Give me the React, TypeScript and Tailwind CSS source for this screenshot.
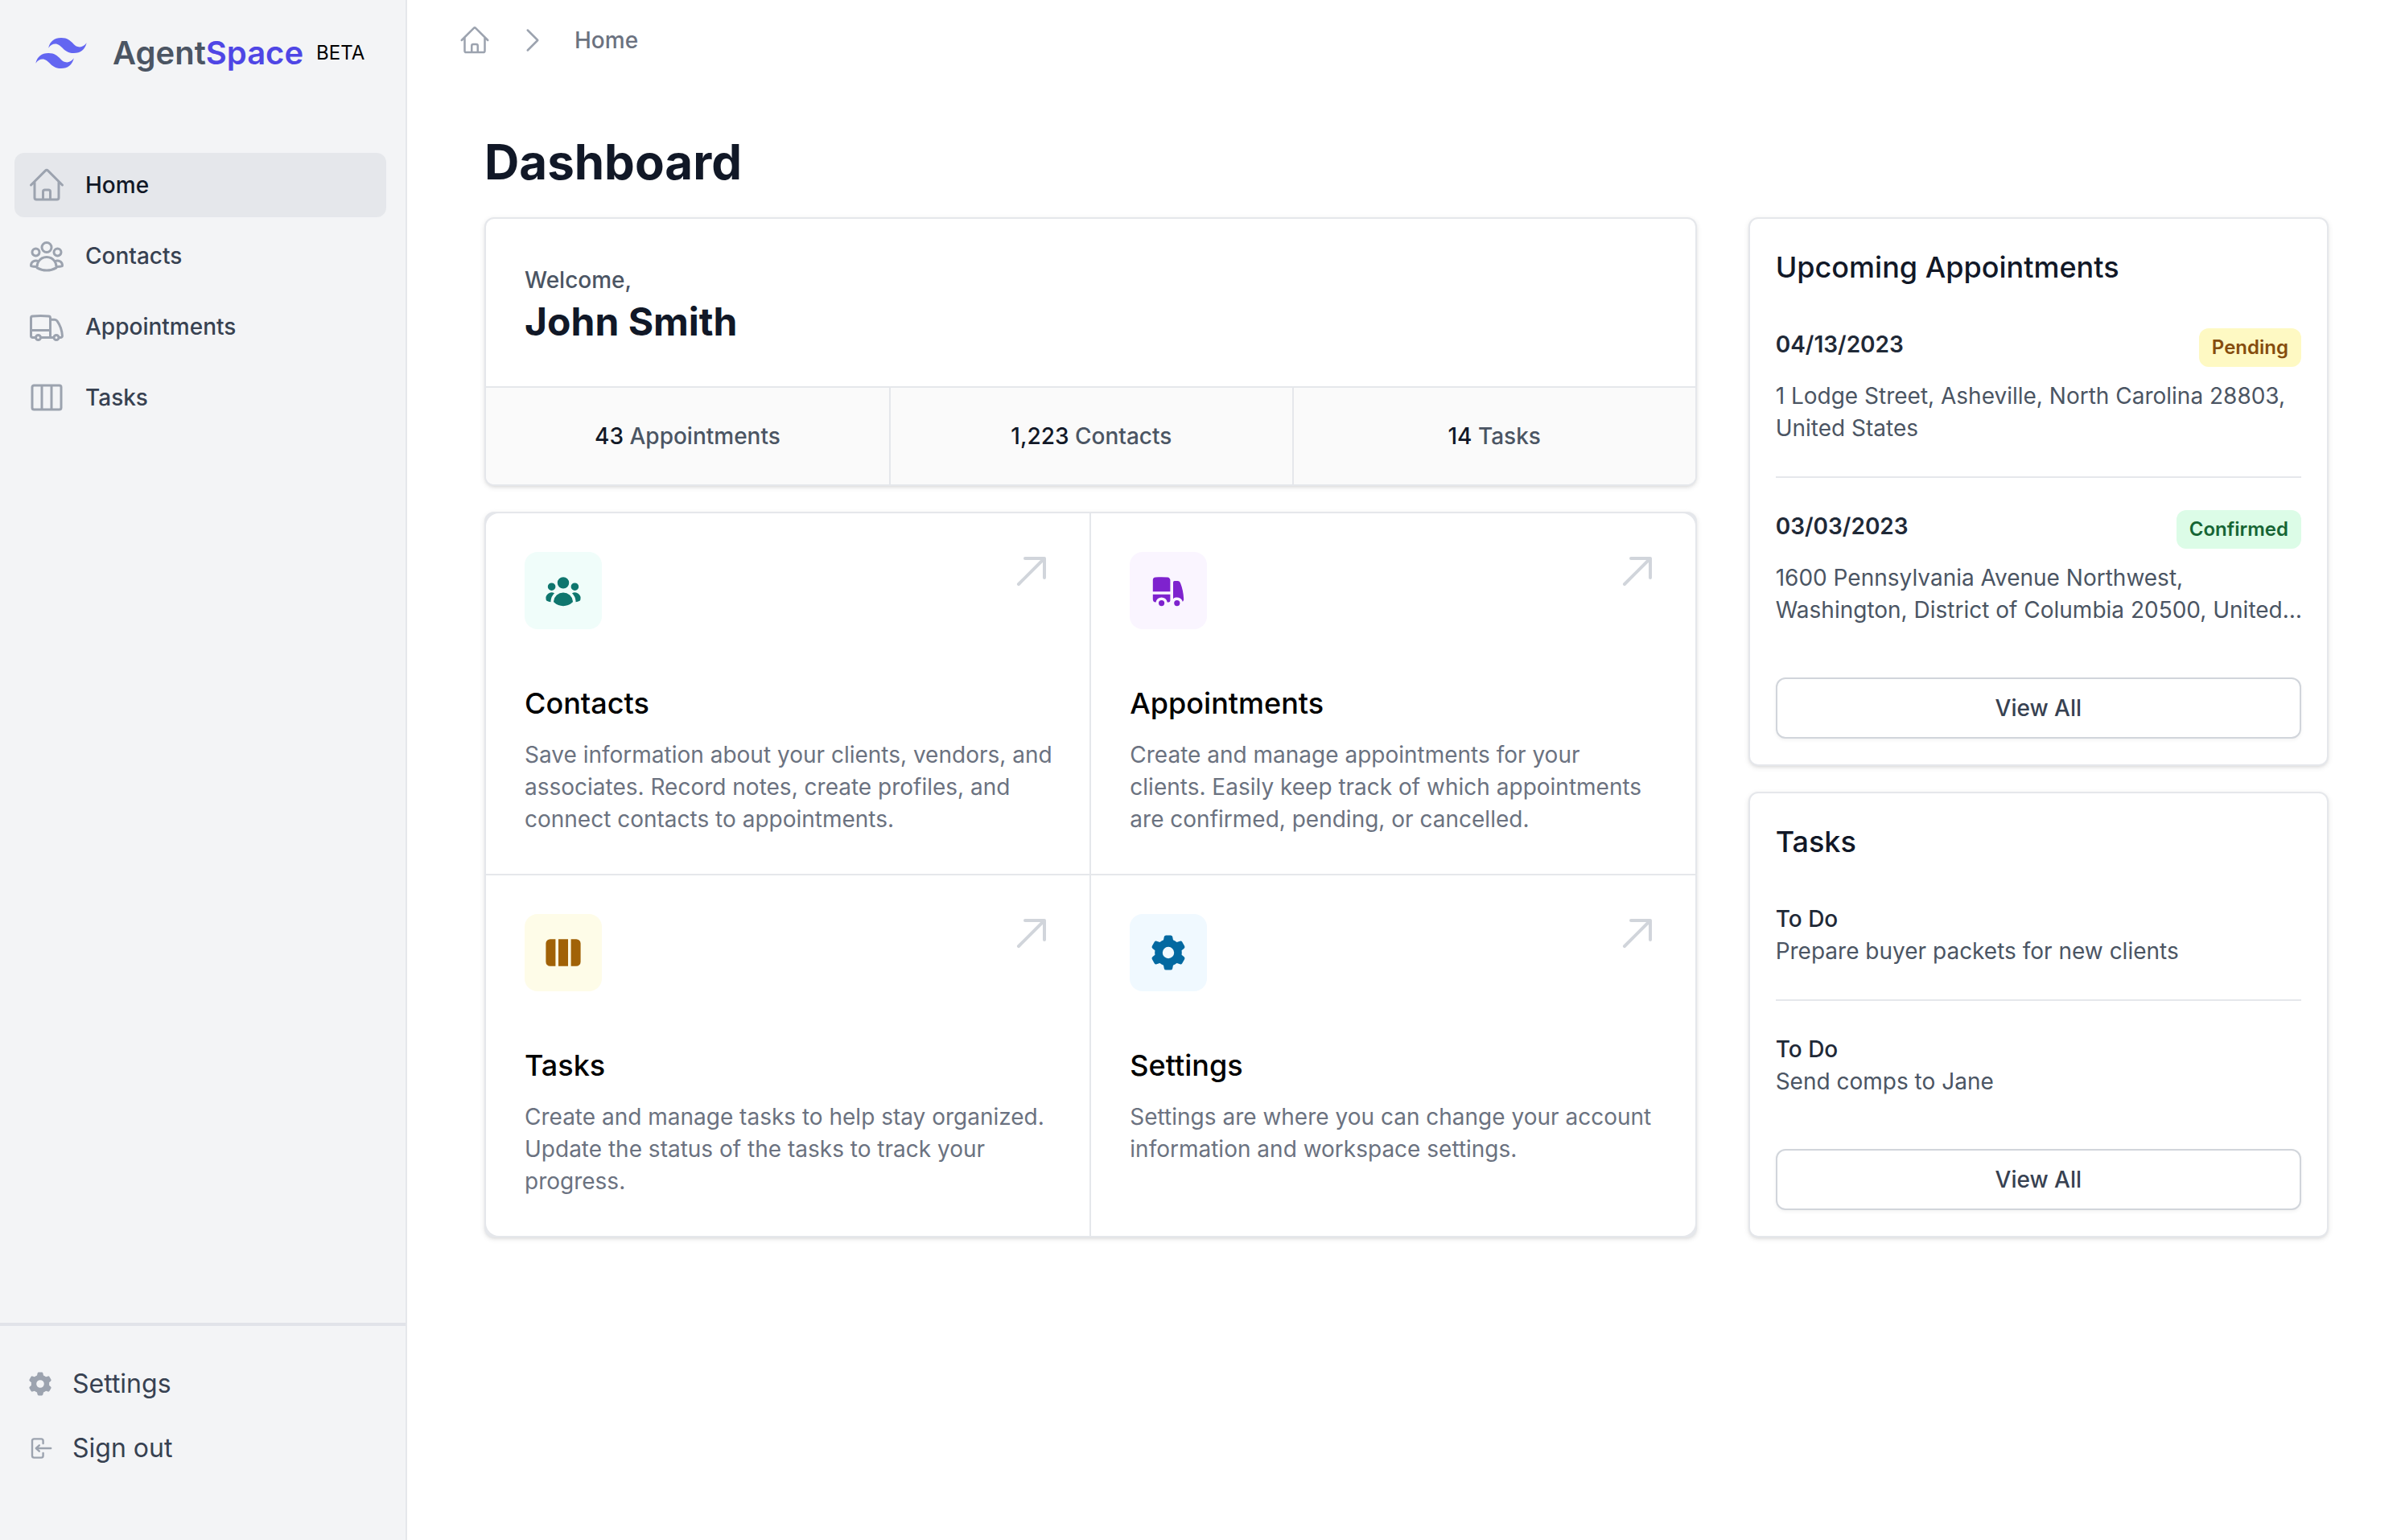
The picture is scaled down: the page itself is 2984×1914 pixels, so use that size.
import type { IconType } from 'react-icons';
import {
  HiMiniArrowLeftOnRectangle,
  HiMiniCog6Tooth,
  HiMiniTruck,
  HiMiniUserGroup,
  HiMiniViewColumns,
  HiOutlineChevronRight,
  HiOutlineHome,
  HiOutlineTruck,
  HiOutlineUserGroup,
  HiOutlineViewColumns,
} from 'react-icons/hi2';

const navigation: { name: string; icon: IconType; current?: boolean }[] = [
  { name: 'Home', icon: HiOutlineHome, current: true },
  { name: 'Contacts', icon: HiOutlineUserGroup },
  { name: 'Appointments', icon: HiOutlineTruck },
  { name: 'Tasks', icon: HiOutlineViewColumns },
];

const secondary: { name: string; icon: IconType }[] = [
  { name: 'Settings', icon: HiMiniCog6Tooth },
  { name: 'Sign out', icon: HiMiniArrowLeftOnRectangle },
];

const stats = [
  { value: '43', label: 'Appointments' },
  { value: '1,223', label: 'Contacts' },
  { value: '14', label: 'Tasks' },
];

const actions: { name: string; icon: IconType; tile: string; corner: string; text: string }[] = [
  {
    name: 'Contacts',
    icon: HiMiniUserGroup,
    tile: 'bg-[#f0fdfa] text-[#0f766e]',
    corner: 'rounded-tl-2xl',
    text: 'Save information about your clients, vendors, and associates. Record notes, create profiles, and connect contacts to appointments.',
  },
  {
    name: 'Appointments',
    icon: HiMiniTruck,
    tile: 'bg-[#faf5ff] text-[#7e22ce]',
    corner: 'rounded-tr-2xl',
    text: 'Create and manage appointments for your clients. Easily keep track of which appointments are confirmed, pending, or cancelled.',
  },
  {
    name: 'Tasks',
    icon: HiMiniViewColumns,
    tile: 'bg-[#fefce8] text-[#a16207]',
    corner: 'rounded-bl-2xl',
    text: 'Create and manage tasks to help stay organized. Update the status of the tasks to track your progress.',
  },
  {
    name: 'Settings',
    icon: HiMiniCog6Tooth,
    tile: 'bg-[#f0f9ff] text-[#0369a1]',
    corner: 'rounded-br-2xl',
    text: 'Settings are where you can change your account information and workspace settings.',
  },
];

const appointments = [
  {
    date: '04/13/2023',
    status: 'Pending',
    badge: 'bg-[#fef9c3] text-[#854d0e]',
    address: '1 Lodge Street, Asheville, North Carolina 28803, United States',
  },
  {
    date: '03/03/2023',
    status: 'Confirmed',
    badge: 'bg-[#dcfce7] text-[#166534]',
    address: '1600 Pennsylvania Avenue Northwest, Washington, District of Columbia 20500, United…',
  },
];

const tasks = [
  { status: 'To Do', title: 'Prepare buyer packets for new clients' },
  { status: 'To Do', title: 'Send comps to Jane' },
];

const card =
  'rounded-xl border-2 border-[#e5e7eb] shadow-[0_2px_6px_0_rgba(0,0,0,0.1),0_2px_4px_-2px_rgba(0,0,0,0.1)]';

function Logo() {
  return (
    <svg viewBox="0 4.8 24 14.4" className="h-[38px] w-16 shrink-0 text-[#6366f1]" fill="currentColor" aria-hidden="true">
      <path d="M12.001,4.8c-3.2,0-5.2,1.6-6,4.8c1.2-1.6,2.6-2.2,4.2-1.8c0.913,0.228,1.565,0.89,2.288,1.624C13.666,10.618,15.027,12,18.001,12c3.2,0,5.2-1.6,6-4.8c-1.2,1.6-2.6,2.2-4.2,1.8c-0.913-0.228-1.565-0.89-2.288-1.624C16.337,6.182,14.976,4.8,12.001,4.8z M6.001,12c-3.2,0-5.2,1.6-6,4.8c1.2-1.6,2.6-2.2,4.2-1.8c0.913,0.228,1.565,0.89,2.288,1.624c1.177,1.194,2.538,2.576,5.512,2.576c3.2,0,5.2-1.6,6-4.8c-1.2,1.6-2.6,2.2-4.2,1.8c-0.913-0.228-1.565-0.89-2.288-1.624C10.337,13.382,8.976,12,6.001,12z" />
    </svg>
  );
}

function Sidebar() {
  return (
    <aside className="flex w-[506px] shrink-0 flex-col border-r-2 border-[#e5e7eb] bg-[#f3f4f6]">
      <div className="flex h-[132px] items-center pl-11">
        <Logo />
        <span className="ml-8 text-[40px] leading-[56px] font-semibold text-[#4b5563]">
          Agent<span className="text-[#4f46e5]">Space</span>
        </span>
        <span className="ml-4 text-2xl text-black">BETA</span>
      </div>
      <nav className="flex flex-1 flex-col gap-2 pt-[58px] pr-6 pl-[18px]" aria-label="Main">
        {navigation.map((item) => (
          <a
            key={item.name}
            href="#"
            aria-current={item.current ? 'page' : undefined}
            className={
              item.current
                ? 'flex items-center gap-6 rounded-xl bg-[#e5e7eb] p-4 text-[28px] leading-10 font-medium text-[#111827]'
                : 'flex items-center gap-6 rounded-xl p-4 text-[28px] leading-10 font-medium text-[#374151]'
            }
          >
            <item.icon className="size-12 shrink-0 text-[#9ca3af]" aria-hidden="true" />
            {item.name}
          </a>
        ))}
      </nav>
      <div className="border-t-4 border-[#e1e3e9] pt-8 pb-[74px]">
        {secondary.map((item) => (
          <a key={item.name} href="#" className="flex items-center gap-6 px-[34px] py-4 text-[32px] leading-[48px] text-[#374151]">
            <item.icon className="size-8 shrink-0 text-[#9ca3af]" aria-hidden="true" />
            {item.name}
          </a>
        ))}
      </div>
    </aside>
  );
}

function Breadcrumb() {
  return (
    <nav className="flex h-[100px] items-center gap-8 pl-16" aria-label="Breadcrumb">
      <a href="#" aria-label="Dashboard home">
        <HiOutlineHome className="size-10 text-[#9ca3af]" aria-hidden="true" />
      </a>
      <HiOutlineChevronRight className="size-10 text-[#9ca3af]" aria-hidden="true" />
      <a href="#" className="text-[28px] leading-10 font-medium text-[#6b7280]">
        Home
      </a>
    </nav>
  );
}

function Welcome() {
  return (
    <section className={`${card} overflow-hidden bg-white`}>
      <div className="px-12 pt-14 pb-12">
        <p className="text-[28px] leading-10 font-medium text-[#4b5563]">Welcome,</p>
        <p className="text-5xl leading-[64px] font-bold text-[#111827]">John Smith</p>
      </div>
      <div className="grid grid-cols-3 border-t-2 border-[#e5e7eb] bg-[#fafafa]">
        {stats.map((stat) => (
          <div
            key={stat.label}
            className="border-l-2 border-[#e5e7eb] px-12 py-10 text-center text-[28px] leading-10 font-medium first:border-l-0"
          >
            <span className="text-[#111827]">{stat.value}</span> <span className="text-[#4b5563]">{stat.label}</span>
          </div>
        ))}
      </div>
    </section>
  );
}

function Actions() {
  return (
    <section className={`${card} grid grid-cols-2 gap-0.5 bg-[#e5e7eb]`}>
      {actions.map((action) => (
        <div key={action.name} className={`relative bg-white py-12 pr-11 pl-12 ${action.corner}`}>
          <span className={`inline-flex rounded-2xl p-6 align-top ${action.tile}`}>
            <action.icon className="size-12" aria-hidden="true" />
          </span>
          <h3 className="mt-16 text-4xl leading-[56px] font-medium text-black">
            <a href="#">{action.name}</a>
          </h3>
          <p className="mt-4 text-[28px] leading-10 text-[#6b7280]">{action.text}</p>
          <span className="absolute top-12 right-12 text-[#d1d5db]" aria-hidden="true">
            <svg className="size-12" fill="currentColor" viewBox="0 0 24 24">
              <path d="M20 4h1a1 1 0 00-1-1v1zm-1 12a1 1 0 102 0h-2zM8 3a1 1 0 000 2V3zM3.293 19.293a1 1 0 101.414 1.414l-1.414-1.414zM19 4v12h2V4h-2zm1-1H8v2h12V3zm-.707.293l-16 16 1.414 1.414 16-16-1.414-1.414z" />
            </svg>
          </span>
        </div>
      ))}
    </section>
  );
}

function ViewAll() {
  return (
    <button
      type="button"
      className="mt-6 w-full rounded-xl border-2 border-[#d1d5db] bg-white py-4 text-[28px] leading-10 font-medium text-[#374151] shadow-[0_2px_4px_0_rgba(0,0,0,0.05)]"
    >
      View All
    </button>
  );
}

export default function App() {
  return (
    <div className="flex min-h-screen bg-white font-['Inter',sans-serif] antialiased">
      <Sidebar />
      <main className="min-w-0 flex-1">
        <Breadcrumb />
        <div className="pt-16 pr-[90px] pb-16 pl-24">
          <h1 className="text-6xl leading-[74px] font-bold text-[#111827]">Dashboard</h1>
          <div className="mt-8 grid grid-cols-3 items-start gap-16">
            <div className="col-span-2 grid gap-8">
              <Welcome />
              <Actions />
            </div>
            <div className="grid gap-8">
              <section className={`${card} bg-white p-8`}>
                <h2 className="text-4xl leading-[56px] font-medium text-[#111827]">Upcoming Appointments</h2>
                <ul className="mt-2 divide-y-2 divide-[#e5e7eb]">
                  {appointments.map((item) => (
                    <li key={item.date} className="py-10">
                      <div className="flex items-start justify-between">
                        <h3 className="text-[28px] leading-10 font-semibold text-[#1f2937]">{item.date}</h3>
                        <span className={`rounded-xl px-4 py-1 text-2xl leading-10 font-semibold ${item.badge}`}>{item.status}</span>
                      </div>
                      <p className="mt-4 -mr-2 text-[28px] leading-10 text-[#4b5563]">{item.address}</p>
                    </li>
                  ))}
                </ul>
                <ViewAll />
              </section>
              <section className={`${card} bg-white p-8`}>
                <h2 className="text-4xl leading-[56px] font-medium text-[#111827]">Tasks</h2>
                <ul className="mt-2 divide-y-2 divide-[#e5e7eb]">
                  {tasks.map((task) => (
                    <li key={task.title} className="py-10">
                      <h3 className="text-[28px] leading-10 font-medium text-[#1f2937]">{task.status}</h3>
                      <p className="text-[28px] leading-10 text-[#4b5563]">{task.title}</p>
                    </li>
                  ))}
                </ul>
                <ViewAll />
              </section>
            </div>
          </div>
        </div>
      </main>
    </div>
  );
}
